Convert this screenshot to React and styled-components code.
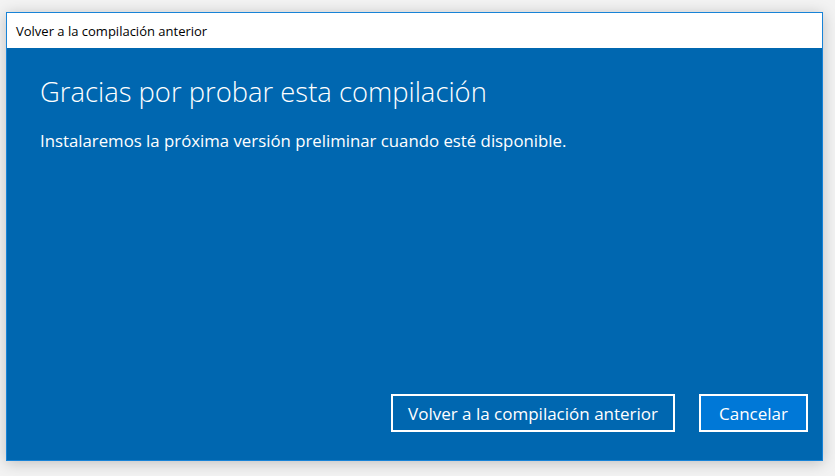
import styled, { createGlobalStyle } from "styled-components";

const GlobalStyle = createGlobalStyle`
  html, body {
    margin: 0;
    padding: 0;
    background: #f3f3f3;
  }
  body {
    font-family: "Open Sans", "Noto Sans", sans-serif;
  }
`;

const Page = styled.div`
  width: 835px;
  height: 476px;
  padding: 12px 0 0 6px;
  box-sizing: border-box;
`;

const Window = styled.div`
  width: 817px;
  height: 449px;
  box-sizing: border-box;
  border: 1px solid #1883d7;
  background: #0067b0;
  display: flex;
  flex-direction: column;
  box-shadow: 0 2px 14px rgba(0, 0, 0, 0.22);
`;

const TitleBar = styled.div`
  height: 35px;
  background: #ffffff;
  color: #000;
  font-size: 13px;
  display: flex;
  align-items: center;
  padding-left: 9px;
  padding-top: 1px;
  box-sizing: border-box;
  flex-shrink: 0;
`;

const Content = styled.div`
  flex: 1;
  display: flex;
  flex-direction: column;
  padding: 26px 14px 28px 33px;
  color: #fff;
`;

const Heading = styled.h1`
  margin: 0;
  font-weight: 300;
  font-size: 27.4px;
  line-height: 36px;
`;

const Message = styled.p`
  margin: 20px 0 0;
  font-size: 16.8px;
  line-height: 22px;
`;

const Actions = styled.div`
  margin-top: auto;
  display: flex;
  justify-content: flex-end;
  gap: 24px;
`;

const Button = styled.button`
  height: 38px;
  padding: 0 ${(p) => (p.$primary ? 18 : 15)}px;
  min-width: 108px;
  box-sizing: border-box;
  border: 2px solid #fff;
  background: ${(p) => (p.$primary ? "#0078d7" : "transparent")};
  color: #fff;
  font-family: "Open Sans", "Noto Sans", sans-serif;
  font-size: 17px;
  cursor: pointer;
`;

export default function App() {
  return (
    <Page>
      <GlobalStyle />
      <Window>
        <TitleBar>Volver a la compilación anterior</TitleBar>
        <Content>
          <Heading>Gracias por probar esta compilación</Heading>
          <Message>
            Instalaremos la próxima versión preliminar cuando esté disponible.
          </Message>
          <Actions>
            <Button>Volver a la compilación anterior</Button>
            <Button $primary>Cancelar</Button>
          </Actions>
        </Content>
      </Window>
    </Page>
  );
}
